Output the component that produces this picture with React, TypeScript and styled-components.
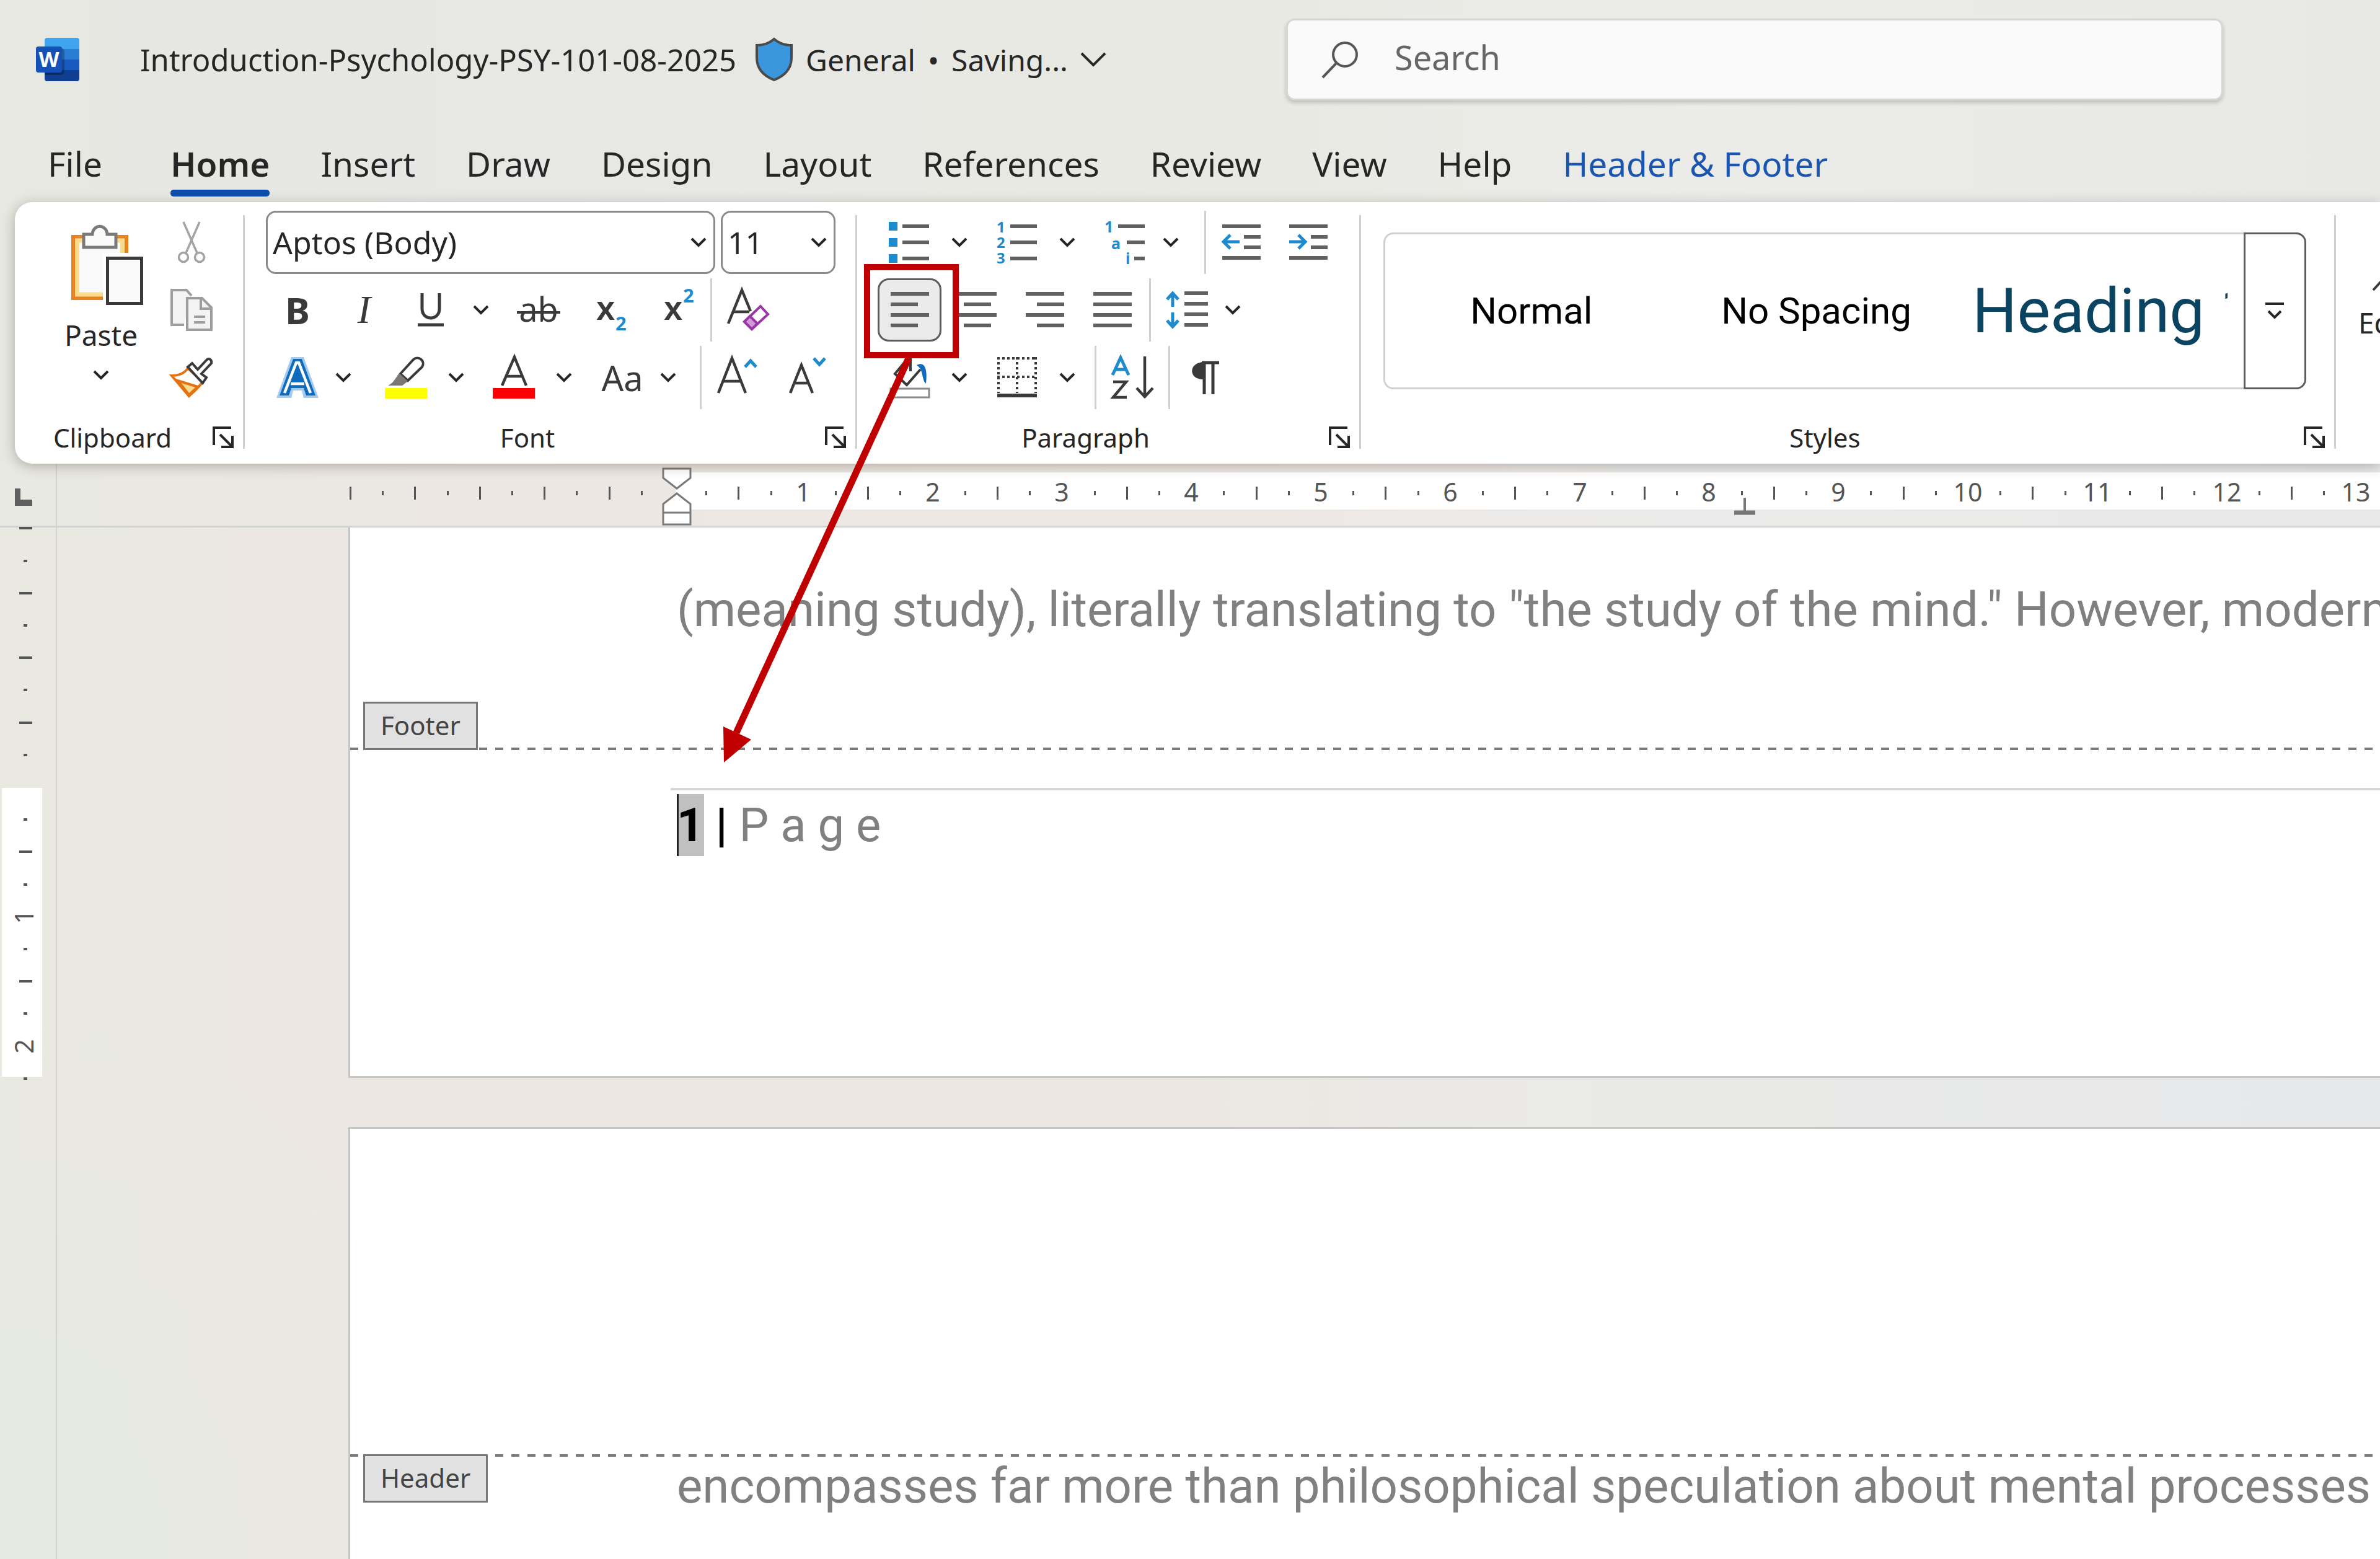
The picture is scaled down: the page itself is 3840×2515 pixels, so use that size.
import React from "react";
import styled, { createGlobalStyle } from "styled-components";

const UI = `"Noto Sans", "Open Sans", sans-serif`;
const DOC = `Roboto, "Noto Sans", sans-serif`;
const BLUE = "#1e8bcd";
const INK = "#3b3a39";
const LINE = "#62615f";

const GlobalStyle = createGlobalStyle`
  *, *::before, *::after { box-sizing: border-box; }
  body { margin: 0; font-family: ${UI}; color: #262626; }
  button, input, select { font-family: inherit; color: inherit; }
  button { border: 0; padding: 0; background: none; cursor: pointer; }
  svg { display: block; flex: none; overflow: visible; }
`;

/* ---------- window ---------- */

const Window = styled.div`
  position: relative;
  display: flex;
  flex-direction: column;
  height: 100vh;
  overflow: hidden;
  background: linear-gradient(90deg, #e6e8e1 0%, #e7e7e5 22%, #e9e9e3 52%, #ebebe9 72%, #e8e8e6 100%);
`;

const TitleBar = styled.header`
  display: flex;
  align-items: center;
  height: 192px;
  padding-left: 58px;
  font-size: 49px;
`;

const FileName = styled.span`
  margin-left: 98px;
  white-space: nowrap;
`;

const Status = styled.button`
  display: flex;
  align-items: center;
  gap: 20px;
  margin-left: 30px;
  font-size: 48px;
  white-space: nowrap;
`;

const SearchBox = styled.label`
  display: flex;
  align-items: center;
  gap: 58px;
  width: 1512px;
  height: 132px;
  margin-left: auto;
  margin-right: 253px;
  padding-left: 54px;
  border: 3px solid #d6d6d5;
  border-radius: 14px;
  background: #fafafa;
  box-shadow: 0 4px 6px rgba(0, 0, 0, 0.18);
`;

const SearchInput = styled.input`
  flex: 1;
  min-width: 0;
  padding: 0 0 8px;
  border: 0;
  outline: 0;
  background: transparent;
  font-size: 54px;
  &::placeholder { color: #666; opacity: 1; }
`;

const Tabs = styled.nav`
  display: flex;
  gap: 82px;
  height: 134px;
  padding: 36px 0 0 77px;
`;

const Tab = styled.button<{ $active?: boolean; $accent?: boolean }>`
  display: flex;
  flex-direction: column;
  gap: 6px;
  font-size: 55px;
  line-height: 72px;
  white-space: nowrap;
  font-weight: ${(p) => (p.$active ? 600 : 400)};
  color: ${(p) => (p.$accent ? "#1a55b0" : "#262626")};
  &:first-child { margin-right: 28px; }
  &::after {
    content: "";
    width: 100%;
    height: 11px;
    border-radius: 5px;
    background: ${(p) => (p.$active ? "#0f4daa" : "transparent")};
  }
`;

/* ---------- ribbon ---------- */

const Ribbon = styled.div`
  position: relative;
  z-index: 1;
  display: flex;
  flex: none;
  height: 422px;
  margin-left: 24px;
  border-radius: 28px 0 0 28px;
  background: #fff;
  box-shadow: 0 4px 20px rgba(60, 40, 30, 0.32);
`;

const Group = styled.section<{ $width: number }>`
  display: flex;
  flex: none;
  flex-direction: column;
  width: ${(p) => p.$width}px;
  padding-top: 14px;
  background: linear-gradient(#d0d0d0, #d0d0d0) right 21px / 3px 377px no-repeat;
`;

const GroupFooter = styled.div<{ $gap: number }>`
  display: grid;
  grid-template-columns: 1fr 34px;
  gap: ${(p) => p.$gap}px;
  align-items: center;
  margin-top: auto;
  padding: 0 18px 14px 0;
  font-size: 42px;
  line-height: 56px;
  text-align: center;
`;

const Rows = styled.div<{ $left: number }>`
  display: flex;
  flex-direction: column;
  gap: 7px;
  padding-left: ${(p) => p.$left}px;
`;

const Row = styled.div<{ $cols: string }>`
  display: grid;
  grid-template-columns: ${(p) => p.$cols};
  height: 102px;
`;

const Tool = styled.button<{ $pressed?: boolean }>`
  display: flex;
  align-items: center;
  justify-content: center;
  height: 102px;
  margin: 0 ${(p) => (p.$pressed ? 3 : 0)}px;
  border: ${(p) => (p.$pressed ? "3px solid #5c5c5c" : "0")};
  border-radius: 18px;
  background: ${(p) => (p.$pressed ? "#ebebeb" : "transparent")};
  color: ${INK};
`;

const SplitBox = styled.div<{ $arrow: number }>`
  display: grid;
  grid-template-columns: 108px ${(p) => p.$arrow}px;
  justify-content: start;
`;

const Rule = styled.span`
  justify-self: center;
  width: 3px;
  height: 102px;
  background: #d0d0d0;
`;

const Glyph = styled.span<{ $size: number; $weight?: number; $italic?: boolean }>`
  font-size: ${(p) => p.$size}px;
  line-height: 102px;
  font-weight: ${(p) => p.$weight ?? 400};
  font-style: ${(p) => (p.$italic ? "italic" : "normal")};
  font-family: ${(p) => (p.$italic ? `"Liberation Serif", serif` : UI)};
`;

const ClipboardTools = styled.div`
  display: grid;
  grid-template-columns: 200px 92px;
  padding-left: 39px;
`;

const PasteButton = styled.button`
  display: flex;
  flex-direction: column;
  align-items: center;
  padding-top: 22px;
  font-size: 46px;
  line-height: 72px;
  svg + span { margin-top: 12px; }
  span + svg { margin-top: 20px; }
`;

const Combos = styled.div`
  display: flex;
  gap: 9px;
  height: 102px;
  padding-left: 3px;
`;

const Combo = styled.label<{ $width: number }>`
  display: grid;
  grid-template-columns: 1fr 38px;
  align-items: center;
  width: ${(p) => p.$width}px;
  border: 3px solid #8a8a8a;
  border-radius: 16px;
  svg, select { grid-row: 1; }
  svg { grid-column: 2; pointer-events: none; }
`;

const Select = styled.select`
  grid-column: 1 / 3;
  height: 96px;
  padding: 0 0 0 8px;
  border: 0;
  appearance: none;
  background: transparent;
  font-size: 50px;
`;

const Gallery = styled.div`
  display: grid;
  grid-template-columns: 6px 1fr 1fr 1fr 101px;
  height: 253px;
  margin: 35px 48px 0 36px;
  border: 3px solid #d0d0d0;
  border-right: 0;
  border-radius: 16px;
`;

const Style = styled.button<{ $heading?: boolean }>`
  overflow: hidden;
  white-space: nowrap;
  font-family: ${DOC};
  font-size: ${(p) => (p.$heading ? 101 : 60)}px;
  color: ${(p) => (p.$heading ? "#0b4460" : "#000")};
  text-align: ${(p) => (p.$heading ? "left" : "center")};
  margin: 0 ${(p) => (p.$heading ? "26px 0 22px" : "0")};
`;

const GalleryMore = styled.button`
  display: flex;
  align-items: center;
  justify-content: center;
  grid-column: 5;
  margin: -3px 0;
  border: 3px solid #5c5c5c;
  border-radius: 0 16px 16px 0;
`;

const EditingButton = styled.button`
  display: flex;
  flex-direction: column;
  align-items: center;
  gap: 14px;
  height: 200px;
  margin: 64px 0 0 36px;
  font-size: 46px;
  line-height: 72px;
`;

/* ---------- rulers and document ---------- */

const RulerBar = styled.div`
  display: grid;
  grid-template-columns: 92px 1fr;
  flex: none;
  height: 103px;
  border-bottom: 3px solid #d3d3d2;
  background: linear-gradient(90deg, #e8e9e2 0%, #ece7e2 18%, #eee8e4 52%, #ebebea 68%, #e9e9e9 100%);
`;

const Corner = styled.div`
  padding: 40px 0 0 24px;
  border-right: 2px solid #d3d3d2;
`;

const Workspace = styled.main`
  display: grid;
  grid-template-columns: 92px 1fr;
  flex: 1;
  min-height: 0;
  background:
    radial-gradient(ellipse 760px 900px at 0 100%, #e6eae0 20%, rgba(230, 234, 224, 0) 100%),
    linear-gradient(90deg, #e9e9e1 0%, #e9e8e2 4%, #ece7e2 10%, #ece7e2 50%, #eaeae8 65%, #e7e8ea 100%);
`;

const SideRuler = styled.div`
  border-right: 2px solid #d3d3d2;
`;

const Canvas = styled.div`
  display: flex;
  flex-direction: column;
  gap: 79px;
  min-width: 0;
  padding-left: 470px;
`;

const Sheet = styled.article<{ $first?: boolean }>`
  flex: none;
  border: solid #c5c5c4;
  border-width: ${(p) => (p.$first ? "0 0 3px 3px" : "3px 0 0 3px")};
  padding: ${(p) => (p.$first ? "88px 0 355px" : "525px 0 100px")};
  background: #fff;
`;

const Line = styled.p<{ $indent?: boolean }>`
  margin: 0;
  padding-left: ${(p) => (p.$indent ? 527 : 0)}px;
  white-space: nowrap;
  font-family: ${DOC};
  font-size: 78px;
  line-height: 90px;
  color: #808080;
`;

const Boundary = styled.div<{ $edge: "top" | "bottom" }>`
  display: grid;
  grid-template-columns: 506px 1fr;
  align-items: start;
  justify-items: start;
  margin-top: ${(p) => (p.$edge === "bottom" ? 103 : 0)}px;
  padding-left: 21px;
  background: repeating-linear-gradient(90deg, #7a7a7a 0 13px, transparent 13px 26px) left ${(p) => p.$edge} / 100% 4px no-repeat;
  ${Line} { margin-top: 7px; }
`;

const Tag = styled.span`
  height: 78px;
  padding: 0 25px;
  border: 3px solid #777;
  background: #e1e1e1;
  font-size: 42px;
  line-height: 70px;
  color: #444;
`;

const FooterText = styled.p`
  margin: 61px 0 0 517px;
  padding: 6px 0 0 10px;
  border-top: 4px solid #d9d9d9;
  font-family: ${DOC};
  font-size: 76px;
  line-height: 100px;
  color: #808080;
  b { color: #000; }
`;

const PageNumber = styled.b`
  display: inline-block;
  background: #c0c0c0;
  box-shadow: inset 3px 0 0 #222;
`;

const Callout = styled.svg`
  position: absolute;
  z-index: 2;
  left: 1150px;
  top: 420px;
  pointer-events: none;
`;

/* ---------- icons ---------- */

const Chevron = () => (
  <svg width="28" height="18" viewBox="0 0 28 18" fill="none" stroke="#262626" strokeWidth="4">
    <path d="M3 3l11 11L25 3" />
  </svg>
);

const Launcher = () => (
  <svg width="34" height="36" viewBox="0 0 34 36" fill="none" stroke="#262626" strokeWidth="4">
    <path d="M2 30V2h28M12 13l19 19M32 15v18H14" />
  </svg>
);

const WordLogo = () => (
  <svg width="70" height="70" viewBox="0 0 70 70">
    <path d="M14 4a4 4 0 0 1 4-4h48a4 4 0 0 1 4 4v14H14z" fill="#41a5ee" />
    <path d="M14 18h56v17H14z" fill="#2b7cd3" />
    <path d="M14 35h56v17H14z" fill="#185abd" />
    <path d="M14 52h56v14a4 4 0 0 1-4 4H18a4 4 0 0 1-4-4z" fill="#103f91" />
    <path d="M14 16h26a6 6 0 0 1 6 6v32a6 6 0 0 1-6 6H14z" fill="#000" opacity=".25" />
    <rect x="0" y="14" width="42" height="42" rx="4" fill="#1551b5" />
    <text x="21" y="47" textAnchor="middle" fontFamily="Open Sans, sans-serif" fontWeight="700" fontSize="34" fill="#fff">W</text>
  </svg>
);

const Shield = () => (
  <svg width="62" height="70" viewBox="0 0 62 70">
    <path d="M31 2c8 7 17 10 28 10v20c0 17-10 29-28 36C13 61 3 49 3 32V12C14 12 23 9 31 2z" fill="#3a96dd" stroke="#4a4a4a" strokeWidth="4" />
  </svg>
);

const TitleChevron = () => (
  <svg width="42" height="24" viewBox="0 0 42 24" fill="none" stroke="#262626" strokeWidth="4">
    <path d="M2 2l19 19L40 2" />
  </svg>
);

const Magnifier = ({ size = 60 }: { size?: number }) => (
  <svg width={size} height={size} viewBox="0 0 60 60" fill="none" stroke="#555" strokeWidth="4">
    <circle cx="38" cy="22" r="19" />
    <path d="M24 36L2 59" />
  </svg>
);

const EditMagnifier = () => (
  <svg width="106" height="80" viewBox="0 0 106 80" fill="none" stroke={INK} strokeWidth="4">
    <circle cx="50" cy="28" r="26" />
    <path d="M31 46L2 78" />
  </svg>
);

const PasteIcon = () => (
  <svg width="136" height="130" viewBox="-20 0 136 130">
    <path d="M3 20h86v99H3z" fill="#fafafa" stroke="#e8821e" strokeWidth="6" />
    <path d="M9.500 26h73v87h-73z" fill="none" stroke="#fbdc8e" strokeWidth="7" />
    <path d="M20 37V16h14C35-1 57-1 58 16h14v21z" fill="#fafafa" stroke="#7a7a78" strokeWidth="5" />
    <path d="M51 46h65v84H51z" fill="#fff" />
    <path d="M58.500 54.500h55v73h-55z" fill="#fafafa" stroke="#3b3a39" strokeWidth="5" />
  </svg>
);

const CutIcon = () => (
  <svg width="44" height="68" viewBox="0 0 44 68" fill="none" stroke="#a3a3a3" strokeWidth="3.500">
    <path d="M9 1l22 50M35 1L13 51" />
    <circle cx="9" cy="58" r="7.500" />
    <circle cx="35" cy="58" r="7.500" />
  </svg>
);

const CopyIcon = () => (
  <svg width="68" height="68" viewBox="0 0 68 68" fill="#f3f3f3" stroke="#9d9d9d" strokeWidth="4">
    <path d="M22 58H2V2h24l8 9" />
    <path d="M27 15h24l15 15v36H27z" />
    <path d="M49 15v17h17M38 45h18M38 54h18" fill="none" />
  </svg>
);

const PainterIcon = () => (
  <svg width="68" height="64" viewBox="0 0 68 64" strokeWidth="4">
    <path d="M28 17C22 26 13 29 2 29l28 33c7-7 15-13 22-23z" fill="#fff" stroke="#e3730f" />
    <path d="M12 37l18 23 14-13z" fill="#fbdc8e" stroke="#e3730f" />
    <path d="M28 15l7-6 9 10L59 3c5-3 8 2 7 6L50 26l8 6-6 9z" fill="#fff" stroke={INK} />
  </svg>
);

const UnderlineIcon = () => (
  <svg width="42" height="54" viewBox="0 0 42 54" fill="none" stroke={INK} strokeWidth="5">
    <path d="M7 0v25c0 20 28 20 28 0V0M0 51h42" />
  </svg>
);

const StrikeIcon = () => (
  <svg width="70" height="84" viewBox="0 -14 70 84">
    <text x="35" y="47" textAnchor="middle" fontFamily="Noto Sans, sans-serif" fontSize="54" fill={INK}>ab</text>
    <path d="M0 32h70" stroke={INK} strokeWidth="4" />
  </svg>
);

const ScriptIcon = ({ up }: { up?: boolean }) => (
  <svg width="50" height="92" viewBox="0 -10 50 92" fontFamily="Noto Sans, sans-serif" fontWeight="700">
    <text x="0" y="52" fontSize="54" fontWeight="600" fill={INK}>x</text>
    <text x="31" y={up ? 24 : 69} fontSize="31" fill={BLUE}>2</text>
  </svg>
);

const ClearIcon = () => (
  <svg width="68" height="68" viewBox="0 0 68 68">
    <path d="M2 56L24 2l14 34M10 37h26" fill="none" stroke={INK} strokeWidth="4.500" />
    <path d="M28 53l26-25 12 13-26 24z" fill="#fff" stroke="#9a35a5" strokeWidth="4" />
    <path d="M28 53l9-9 12 12-9 9z" fill="#cf9ad5" stroke="#9a35a5" strokeWidth="4" />
  </svg>
);

const EffectsIcon = () => (
  <svg width="68" height="66" viewBox="0 0 68 66">
    <path d="M0 66L24 0h20l24 66H44l-3-12H27l-3 12z" fill="#a3cbf0" />
    <path d="M5 62L27 3h14l22 59H48l-4-12H24l-4 12z" fill="#0f6cbd" />
    <path d="M13 58L32 9h4l19 49M23 43h22" fill="none" stroke="#fff" strokeWidth="4.500" />
  </svg>
);

const HighlightIcon = () => (
  <svg width="68" height="68" viewBox="0 0 68 68">
    <path d="M25 28L46 5c8-7 20 2 14 12L37 39z" fill="#fff" stroke={INK} strokeWidth="4" />
    <path d="M23 27l14 13-9 7H5c9-4 12-12 18-20z" fill="#7a7977" />
    <path d="M0 51h68v17H0z" fill="#ff0" />
  </svg>
);

const FontColorIcon = () => (
  <svg width="68" height="68" viewBox="0 0 68 68">
    <path d="M15 47L35 1l19 46M22 32h26" fill="none" stroke={INK} strokeWidth="4.500" />
    <path d="M0 51h68v17H0z" fill="#f00" />
  </svg>
);

const ResizeIcon = ({ grow }: { grow?: boolean }) => (
  <svg width="66" height="72" viewBox="0 0 66 72" fill="none" stroke={INK} strokeWidth="4.500">
    <path d={grow ? "M2 61L24 5l22 56M10 42h28" : "M6 61L24 16l18 45M13 45h23"} />
    <path d={grow ? "M45 19l9-10 9 10" : "M44 5l9 10 9-10"} stroke={BLUE} strokeWidth="5" />
  </svg>
);

const bars = (rows: [number, number, number][], color = LINE) =>
  rows.map(([x, y, w]) => <rect key={`${x}-${y}`} x={x} y={y} width={w} height="6" fill={color} />);

const BulletsIcon = () => (
  <svg width="66" height="66" viewBox="0 0 66 66">
    {[1, 27, 53].map((y) => <rect key={y} y={y - 1} width="14" height="14" fill={BLUE} />)}
    {bars([[22, 4, 43], [22, 30, 43], [22, 56, 43]])}
  </svg>
);

const NumberingIcon = () => (
  <svg width="66" height="70" viewBox="0 0 66 70" fontFamily="Noto Sans, sans-serif" fontWeight="700" fontSize="24" fill={BLUE}>
    <text x="0" y="19">1</text>
    <text x="0" y="44">2</text>
    <text x="0" y="69">3</text>
    {bars([[22, 6, 43], [22, 32, 43], [22, 58, 43]])}
  </svg>
);

const MultilevelIcon = () => (
  <svg width="66" height="70" viewBox="0 0 66 70" fontFamily="Noto Sans, sans-serif" fontWeight="700" fontSize="25" fill={BLUE}>
    <text x="0" y="19">1</text>
    <text x="11" y="46">a</text>
    <text x="34" y="70">i</text>
    {bars([[22, 6, 43], [36, 32, 29], [48, 58, 17]])}
  </svg>
);

const IndentIcon = ({ more }: { more?: boolean }) => (
  <svg width="62" height="60" viewBox="0 0 62 60">
    {bars([[0, 1, 62], [35, 18, 27], [35, 35, 27], [0, 52, 62]])}
    <path d={more ? "M0 29h24M15 18l11 11-11 11" : "M28 29H3M13 18L2 29l11 11"} fill="none" stroke={BLUE} strokeWidth="5" />
  </svg>
);

const AlignIcon = ({ kind }: { kind: "left" | "center" | "right" | "justify" }) => {
  const w = kind === "justify" ? 62 : 44;
  const x = kind === "center" ? 9 : kind === "right" ? 18 : 0;
  return (
    <svg width="62" height="58" viewBox="0 0 62 58">
      {bars([[0, 0, 62], [x, 17, w], [0, 34, 62], [x, 51, w]])}
    </svg>
  );
};

const SpacingIcon = () => (
  <svg width="70" height="62" viewBox="0 0 70 62">
    <path d="M12 26V4M3 14l9-10 9 10M12 35v23M3 48l9 10 9-10" fill="none" stroke={BLUE} strokeWidth="5" />
    {bars([[31, 1, 38], [31, 18, 38], [31, 35, 38], [31, 52, 38]])}
  </svg>
);

const ShadingIcon = () => (
  <svg width="68" height="68" viewBox="-2 0 68 68" fill="none" stroke={INK} strokeWidth="4">
    <path d="M27 2c0-3 7-3 7 0v22M28 5L9 28l19 18 22-25" />
    <path d="M44 14c12-6 18 4 15 30-8-8-3-22-15-30z" fill="#0f6cbd" stroke="none" />
    <path d="M2 52h62v14H2z" stroke="#8a8a8a" fill="#fff" strokeWidth="3" />
  </svg>
);

const BordersIcon = () => (
  <svg width="64" height="66" viewBox="0 0 64 66" stroke={INK} strokeWidth="4">
    <path d="M0 2h64M0 32h64M2 0v58M32 0v58M62 0v58" fill="none" strokeDasharray="4 4" />
    <path d="M0 62h64" strokeWidth="6" />
  </svg>
);

const SortIcon = () => (
  <svg width="70" height="70" viewBox="0 0 70 70" fill="none" strokeWidth="5">
    <path d="M3 31L16 3l13 28M8 22h16" stroke={BLUE} />
    <path d="M4 42h21L4 67h22M55 1v64M42 52l13 14 13-14" stroke={INK} strokeWidth="4.500" />
  </svg>
);

const PilcrowIcon = () => (
  <svg width="44" height="54" viewBox="0 0 44 54">
    <path d="M20 2C-6 2-6 30 18 30h3V2z" fill={INK} />
    <path d="M16 3h28M20 3v51M34 3v51" stroke={INK} strokeWidth="5" fill="none" />
  </svg>
);

const MoreIcon = () => (
  <svg width="30" height="28" viewBox="0 0 30 28" fill="none" stroke="#262626" strokeWidth="4">
    <path d="M0 2h30M5 14l10 10 10-10" />
  </svg>
);

/* ---------- pieces ---------- */

const Split = ({ label, arrow = 54, children }: { label: string; arrow?: number; children: React.ReactNode }) => (
  <SplitBox $arrow={arrow}>
    <Tool aria-label={label}>{children}</Tool>
    <Tool aria-label={`${label} options`}><Chevron /></Tool>
  </SplitBox>
);

const Footer = ({ title, gap = 24 }: { title: string; gap?: number }) => (
  <GroupFooter $gap={gap}>
    <span>{title}</span>
    <button aria-label={`${title} settings`}><Launcher /></button>
  </GroupFooter>
);

const UNIT = 208.8;
const ORIGIN = 995;

const HorizontalRuler = () => {
  const quarters = Array.from({ length: 65 }, (_, i) => i - 10).filter((q) => q !== 0);
  return (
    <svg width="100%" height="100" fontFamily="Noto Sans, sans-serif" fontSize="41" fill="#555">
      <rect x="999" y="14" width="100%" height="60" fill="#fff" />
      {quarters.map((q) => {
        const x = Math.round(ORIGIN + (q * UNIT) / 4);
        if (q > 0 && q % 4 === 0) return <text key={q} x={x} y="61" textAnchor="middle">{q / 4}</text>;
        return q % 2 === 0
          ? <rect key={q} x={x - 1} y="37" width="3" height="21" />
          : <rect key={q} x={x - 1} y="44" width="3" height="7" />;
      })}
      <g fill="#fff" stroke="#7a7a7a" strokeWidth="3">
        <path d="M978 8h44v15l-22 17-22-17z" />
        <path d="M978 98V65l22-17 22 17v33zM978 79h44" />
      </g>
      <path d="M2723 55v24" stroke="#777" strokeWidth="4" />
      <path d="M2706 79h34" stroke="#777" strokeWidth="7" />
    </svg>
  );
};

const VerticalRuler = () => (
  <svg width="90" height="900" fontFamily="Noto Sans, sans-serif" fontSize="41" fill="#555">
    <rect x="3" y="420" width="65" height="466" fill="#fff" />
    {Array.from({ length: 18 }, (_, i) => i - 8).map((q) => {
      const y = Math.round(419 + (q * UNIT) / 4);
      if (q === 0) return null;
      if (q > 0 && q % 4 === 0)
        return <text key={q} transform={`translate(54 ${y}) rotate(-90)`} textAnchor="middle">{q / 4}</text>;
      return q % 2 === 0
        ? <rect key={q} x="31" y={y - 2} width="21" height="4" />
        : <rect key={q} x="38" y={y - 2} width="6" height="4" />;
    })}
  </svg>
);

const TABS = ["File", "Home", "Insert", "Draw", "Design", "Layout", "References", "Review", "View", "Help", "Header & Footer"];

export default function App() {
  return (
    <Window>
      <GlobalStyle />
      <TitleBar>
        <WordLogo />
        <FileName>Introduction-Psychology-PSY-101-08-2025</FileName>
        <Status>
          <Shield />
          <span>General</span>
          <span>•</span>
          <span>Saving...</span>
          <TitleChevron />
        </Status>
        <SearchBox>
          <Magnifier />
          <SearchInput type="search" placeholder="Search" aria-label="Search" />
        </SearchBox>
      </TitleBar>

      <Tabs>
        {TABS.map((t) => (
          <Tab key={t} $active={t === "Home"} $accent={t === "Header & Footer"}>{t}</Tab>
        ))}
      </Tabs>

      <Ribbon>
        <Group $width={371}>
          <ClipboardTools>
            <PasteButton>
              <PasteIcon />
              <span>Paste</span>
              <Chevron />
            </PasteButton>
            <Rows $left={0}>
              <Tool aria-label="Cut"><CutIcon /></Tool>
              <Tool aria-label="Copy"><CopyIcon /></Tool>
              <Tool aria-label="Format painter"><PainterIcon /></Tool>
            </Rows>
          </ClipboardTools>
          <Footer title="Clipboard" gap={4} />
        </Group>

        <Group $width={988}>
          <Rows $left={31}>
            <Combos>
              <Combo $width={725}>
                <Select aria-label="Font"><option>Aptos (Body)</option></Select>
                <Chevron />
              </Combo>
              <Combo $width={185}>
                <Select aria-label="Font size"><option>11</option></Select>
                <Chevron />
              </Combo>
            </Combos>
            <Row $cols="108px 107px 174px 108px 128px 90px 12px 108px">
              <Tool aria-label="Bold"><Glyph $size={60} $weight={700}>B</Glyph></Tool>
              <Tool aria-label="Italic"><Glyph $size={64} $italic>I</Glyph></Tool>
              <Split label="Underline"><UnderlineIcon /></Split>
              <Tool aria-label="Strikethrough"><StrikeIcon /></Tool>
              <Tool aria-label="Subscript"><ScriptIcon /></Tool>
              <Tool aria-label="Superscript"><ScriptIcon up /></Tool>
              <Rule />
              <Tool aria-label="Clear formatting"><ClearIcon /></Tool>
            </Row>
            <Row $cols="175px 174px 175px 174px 12px 108px 116px">
              <Split label="Text effects" arrow={40}><EffectsIcon /></Split>
              <Split label="Highlight"><HighlightIcon /></Split>
              <Split label="Font color"><FontColorIcon /></Split>
              <Split label="Change case" arrow={40}><Glyph $size={56}>Aa</Glyph></Split>
              <Rule />
              <Tool aria-label="Grow font"><ResizeIcon grow /></Tool>
              <Tool aria-label="Shrink font"><ResizeIcon /></Tool>
            </Row>
          </Rows>
          <Footer title="Font" />
        </Group>

        <Group $width={813}>
          <Rows $left={30}>
            <Row $cols="174px 174px 178px 10px 108px 108px">
              <Split label="Bullets"><BulletsIcon /></Split>
              <Split label="Numbering"><NumberingIcon /></Split>
              <Split label="Multilevel list" arrow={40}><MultilevelIcon /></Split>
              <Rule />
              <Tool aria-label="Decrease indent"><IndentIcon /></Tool>
              <Tool aria-label="Increase indent"><IndentIcon more /></Tool>
            </Row>
            <Row $cols="109px 109px 109px 109px 12px 174px">
              <Tool $pressed aria-label="Align left"><AlignIcon kind="left" /></Tool>
              <Tool aria-label="Center"><AlignIcon kind="center" /></Tool>
              <Tool aria-label="Align right"><AlignIcon kind="right" /></Tool>
              <Tool aria-label="Justify"><AlignIcon kind="justify" /></Tool>
              <Rule />
              <Split label="Line spacing" arrow={40}><SpacingIcon /></Split>
            </Row>
            <Row $cols="174px 174px 12px 108px 10px 108px">
              <Split label="Shading"><ShadingIcon /></Split>
              <Split label="Borders"><BordersIcon /></Split>
              <Rule />
              <Tool aria-label="Sort"><SortIcon /></Tool>
              <Rule />
              <Tool aria-label="Show marks"><PilcrowIcon /></Tool>
            </Row>
          </Rows>
          <Footer title="Paragraph" />
        </Group>

        <Group $width={1573}>
          <Gallery>
            <span />
            <Style>Normal</Style>
            <Style>No Spacing</Style>
            <Style $heading>Heading 1</Style>
            <GalleryMore aria-label="More styles"><MoreIcon /></GalleryMore>
          </Gallery>
          <Footer title="Styles" />
        </Group>

        <EditingButton>
          <EditMagnifier />
          <span>Editing</span>
        </EditingButton>
      </Ribbon>

      <RulerBar>
        <Corner>
          <svg width="28" height="28" viewBox="0 0 28 28"><path d="M0 0h9v18h19v10H0z" fill="#5f5f5f" /></svg>
        </Corner>
        <HorizontalRuler />
      </RulerBar>

      <Workspace>
        <SideRuler><VerticalRuler /></SideRuler>
        <Canvas>
          <Sheet $first>
            <Line $indent>(meaning study), literally translating to "the study of the mind." However, modern</Line>
            <Boundary $edge="bottom"><Tag>Footer</Tag></Boundary>
            <FooterText><PageNumber>1</PageNumber> <b>|</b> P a g e</FooterText>
          </Sheet>
          <Sheet>
            <Boundary $edge="top">
              <Tag>Header</Tag>
              <Line>encompasses far more than philosophical speculation about mental processes</Line>
            </Boundary>
          </Sheet>
        </Canvas>
      </Workspace>

      <Callout width="410" height="820" viewBox="0 0 410 820">
        <rect x="249" y="11" width="143" height="142" fill="none" stroke="#c00000" strokeWidth="10" />
        <path d="M316 158L38 762" stroke="#c00000" strokeWidth="11" />
        <path d="M17 752l45 21-44 37z" fill="#c00000" />
      </Callout>
    </Window>
  );
}
